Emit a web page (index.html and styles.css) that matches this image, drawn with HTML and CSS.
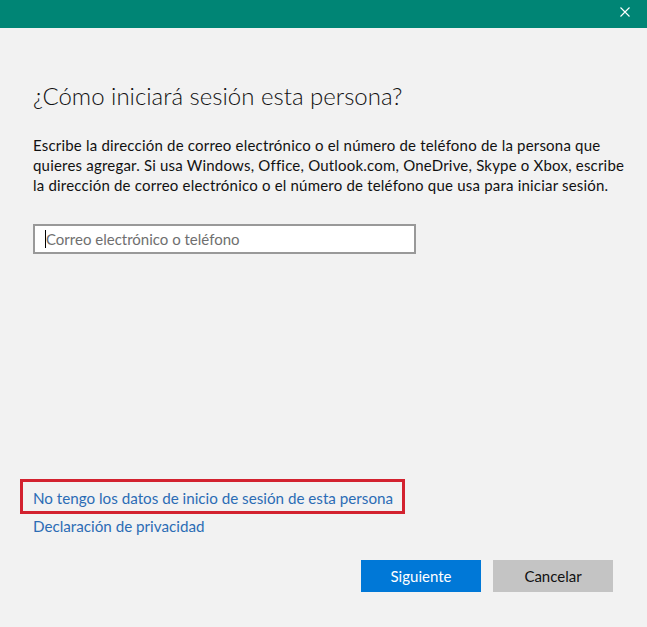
FILE: index.html
```html
<!DOCTYPE html>
<html lang="es">
<head>
<meta charset="utf-8">
<title>Cuenta Microsoft</title>
<link rel="stylesheet" href="styles.css">
</head>
<body>
<div class="window">
  <div class="titlebar">
    <span class="close" aria-label="Cerrar">
      <svg width="10" height="10" viewBox="0 0 10 10"><path d="M0.5 0.5 L9.5 9.5 M9.5 0.5 L0.5 9.5" stroke="#ffffff" stroke-width="1.1" fill="none"/></svg>
    </span>
  </div>
  <div class="content">
    <h1 class="title">¿Cómo iniciará sesión esta persona?</h1>
    <p class="desc">Escribe la dirección de correo electrónico o el número de teléfono de la persona que quieres agregar. Si usa Windows, Office, Outlook.com, OneDrive, Skype o Xbox, escribe la dirección de correo electrónico o el número de teléfono que usa para iniciar sesión.</p>
    <div class="field"><span class="caret"></span><span class="placeholder">Correo electrónico o teléfono</span></div>
    <div class="spacer"></div>
    <div class="links">
      <a class="link highlighted" href="#">No tengo los datos de inicio de sesión de esta persona</a>
      <a class="link second" href="#">Declaración de privacidad</a>
    </div>
    <div class="buttons">
      <button class="btn primary">Siguiente</button>
      <button class="btn secondary">Cancelar</button>
    </div>
  </div>
</div>
</body>
</html>
```
FILE: styles.css
```css
html, body {
  margin: 0;
  padding: 0;
  background: #f2f2f2;
}
body {
  font-family: "Lato", "Noto Sans", sans-serif;
  color: #000;
}
.window {
  width: 647px;
  height: 627px;
  display: flex;
  flex-direction: column;
  background: #f2f2f2;
}
.titlebar {
  height: 28px;
  background: #008575;
  display: flex;
  justify-content: flex-end;
  align-items: center;
  padding-right: 17px;
  flex-shrink: 0;
}
.close {
  display: flex;
  width: 10px;
  height: 10px;
  margin-top: -4px;
}
.content {
  flex: 1;
  display: flex;
  flex-direction: column;
  padding: 0 34px 35px 33px;
}
.title {
  margin: 51px 0 0 0;
  font-size: 24px;
  font-weight: 300;
  line-height: 34px;
  color: #111;
}
.desc {
  margin: 22px -30px 0 0;
  font-size: 15px;
  letter-spacing: 0.2px;
  line-height: 20px;
  color: #111;
  max-width: 604px;
}
.field {
  margin-top: 29px;
  width: 379px;
  height: 26px;
  border: 2px solid #999999;
  background: #fff;
  display: flex;
  align-items: center;
  padding-left: 0;
}
.caret {
  width: 1px;
  height: 18px;
  background: #000;
  margin-left: 10px;
}
.placeholder {
  font-size: 15px;
  color: #6f6f6f;
}
.spacer { flex: 1; }
.links {
  display: flex;
  flex-direction: column;
  align-items: flex-start;
  margin-left: -13px;
}
.link {
  font-size: 15.2px;
  line-height: 20px;
  color: #2b6cb5;
  text-decoration: none;
  padding-left: 13px;
}
.highlighted {
  border: 3px solid #d3222f;
  padding: 6px 9px 3px 10px;
}
.second {
  margin-top: 2px;
}
.buttons {
  margin-top: 24px;
  display: flex;
  justify-content: flex-end;
  gap: 12px;
}
.btn {
  width: 120px;
  height: 32px;
  border: none;
  font-family: "Lato", "Noto Sans", sans-serif;
  font-size: 15px;
  padding: 0;
}
.primary { background: #0078d7; color: #fff; }
.secondary { background: #c4c4c4; color: #111; }
```
